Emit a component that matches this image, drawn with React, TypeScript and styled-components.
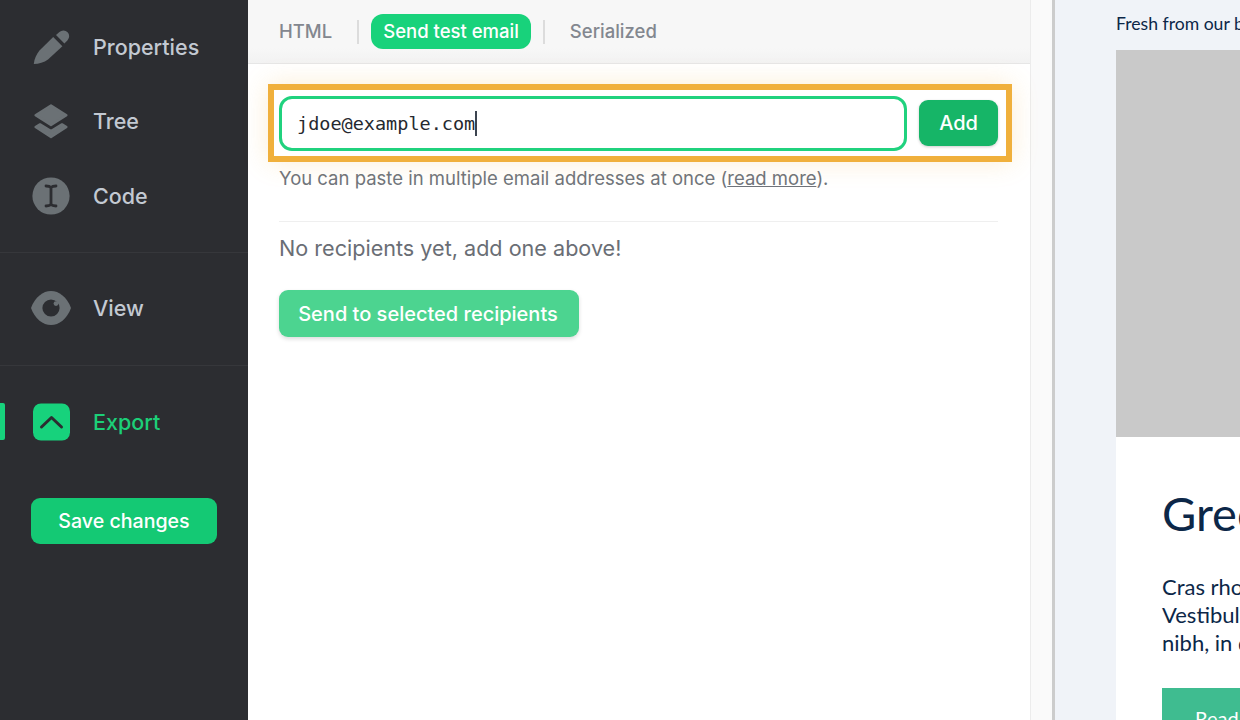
import React from 'react';
import styled, { createGlobalStyle } from 'styled-components';

const Global = createGlobalStyle`
  html, body { margin: 0; padding: 0; height: 100%; overflow: hidden; }
  body { font-family: Inter, "Liberation Sans", sans-serif; -webkit-font-smoothing: antialiased; }
`;

const Page = styled.div`
  display: flex;
  width: 1240px;
  height: 720px;
  overflow: hidden;
`;

const Sidebar = styled.nav`
  flex: 0 0 248px;
  background: #2c2d31;
  display: flex;
  flex-direction: column;
`;

const NavGroup = styled.div<{ $top: number; $bottom: number; $line?: boolean }>`
  padding: ${p => p.$top}px 0 ${p => p.$bottom}px;
  border-bottom: ${p => (p.$line ? '1px solid #36373b' : 'none')};
`;

const NavRow = styled.div<{ $active?: boolean }>`
  position: relative;
  height: 74.5px;
  display: flex;
  align-items: center;
  padding-left: 32px;
  gap: 23px;
  font-size: 21.5px;
  font-weight: 500;
  color: ${p => (p.$active ? '#1ccf78' : '#c3c9d2')};
`;

const ActiveMark = styled.span`
  position: absolute;
  left: 0;
  top: 18px;
  width: 5px;
  height: 37px;
  background: #17d27c;
  border-radius: 0 2px 2px 0;
`;

const IconBox = styled.svg`
  flex: 0 0 38px;
  width: 38px;
  height: 38px;
  display: block;
`;

const SaveButton = styled.button`
  align-self: flex-start;
  margin: 19px 0 0 31px;
  width: 186px;
  height: 46px;
  border: 0;
  border-radius: 9px;
  background: #14c974;
  color: #fff;
  font: 500 19.6px Inter, sans-serif;
  padding: 0;
`;

const Panel = styled.main`
  position: relative;
  flex: 0 0 782px;
  background: #fff;
  display: flex;
  flex-direction: column;
`;

const TabBar = styled.div`
  height: 64px;
  box-sizing: border-box;
  background: linear-gradient(#f7f7f7 0, #f7f7f7 48px, #f2f2f2 100%);
  border-bottom: 1px solid #e6e6e6;
  display: flex;
  align-items: center;
  padding-left: 18.5px;
`;

const Tab = styled.span<{ $active?: boolean }>`
  height: 35px;
  line-height: 35px;
  padding: 0 12.5px;
  border-radius: 12px;
  font-size: 18.5px;
  font-weight: 500;
  background: ${p => (p.$active ? '#18d27b' : 'transparent')};
  color: ${p => (p.$active ? '#fff' : '#83878f')};
`;

const TabSep = styled.span`
  width: 2px;
  height: 24px;
  background: #dcdcdc;
  margin: 0 12px;
`;

const Form = styled.section`
  padding: 32px 32px 0 31px;
`;

const InputRow = styled.div`
  display: flex;
  align-items: flex-start;
  gap: 12px;
`;

const InputBox = styled.div`
  flex: 1;
  height: 55px;
  box-sizing: border-box;
  border: 3px solid #20d27e;
  border-radius: 13px;
  display: flex;
  align-items: center;
  padding-left: 15px;
  font: 18.5px "DejaVu Sans Mono", monospace;
  color: #26292f;
  background: #fff;
`;

const Caret = styled.span`
  display: inline-block;
  width: 2px;
  height: 25px;
  background: #3c4450;
`;

const AddButton = styled.button`
  width: 79px;
  height: 46px;
  margin-top: 4px;
  border: 0;
  border-radius: 9px;
  background: #16b567;
  color: #fff;
  font: 500 20px Inter, sans-serif;
  padding: 0;
  box-shadow: 0 1px 3px rgba(0, 0, 0, 0.2);
`;

const Help = styled.p`
  margin: 14px 0 0;
  font-size: 18.5px;
  line-height: 26px;
  color: #6f747b;
  a { color: inherit; text-decoration: underline; }
`;

const Rule = styled.hr`
  border: 0;
  height: 1px;
  background: #efefef;
  margin: 30px 0 0;
`;

const Empty = styled.p`
  margin: 11px 0 0;
  font-size: 21.6px;
  line-height: 30px;
  color: #6a6e75;
`;

const SendButton = styled.button`
  display: block;
  margin-top: 27px;
  width: 300px;
  height: 47px;
  border: 0;
  border-radius: 9px;
  background: #4cd490;
  color: #fff;
  font: 500 20px Inter, sans-serif;
  padding: 0 2px 0 0;
  box-shadow: 0 2px 4px rgba(0, 0, 0, 0.14);
`;

const Highlight = styled.div`
  position: absolute;
  left: 20px;
  top: 84px;
  width: 744px;
  height: 78px;
  box-sizing: border-box;
  border: 6px solid #f0b03c;
  box-shadow: 0 0 24px rgba(240, 176, 60, 0.22);
  pointer-events: none;
`;

const Gutter = styled.div`
  flex: 0 0 25px;
  box-sizing: border-box;
  background: #fafafa;
  border-left: 1px solid #ececec;
  border-right: 3px solid #cccccc;
`;

const Preview = styled.aside`
  flex: 1;
  min-width: 0;
  background: #f0f3f8;
  padding-left: 61px;
  overflow: hidden;
  font-family: Lato, "Open Sans", sans-serif;
  color: #0c2748;
`;

const Lead = styled.div`
  height: 50px;
  line-height: 48px;
  font-size: 17.6px;
  white-space: nowrap;
`;

const Card = styled.article`
  width: 600px;
  background: #fff;
`;

const Hero = styled.div`
  height: 387px;
  background: #c9c9c9;
`;

const CardBody = styled.div`
  padding: 46px 46px 0;
`;

const Title = styled.h1`
  margin: 0;
  font-size: 47px;
  line-height: 60px;
  font-weight: 400;
  white-space: nowrap;
`;

const Para = styled.p`
  margin: 30px 0 0;
  font-size: 22px;
  line-height: 28px;
  white-space: nowrap;
`;

const Cta = styled.div`
  display: inline-block;
  margin-top: 31px;
  background: #3fbc90;
  color: #fff;
  font-size: 20px;
  padding: 18px 33px;
`;

const Grey = '#6b7175';

const PencilIcon = () => (
  <IconBox viewBox="0 0 38 38">
    <path fill={Grey} d="M1.8 36 C2.2 31 4.5 26 7.5 22.5 L21.2 9 L30.4 18.2 L16 31.5 C12 34.5 7 35.8 1.8 36 Z" />
    <path fill={Grey} d="M24 7 L27.4 4 A5.8 5.8 0 0 1 35.4 12.4 L32.4 15.4 Z" />
  </IconBox>
);

const LayersIcon = () => (
  <IconBox viewBox="0 0 38 38">
    <path fill={Grey} stroke={Grey} strokeWidth="2.4" strokeLinejoin="round" d="M19 3.4 L34.4 13.2 L19 23 L3.6 13.2 Z" />
    <path fill={Grey} stroke={Grey} strokeWidth="2.4" strokeLinejoin="round" d="M8 22.4 L19 29 L30 22.4 L34.4 25 L19 35 L3.6 25 Z" />
  </IconBox>
);

const CodeIcon = () => (
  <IconBox viewBox="0 0 38 38">
    <circle cx="19" cy="19" r="18.6" fill={Grey} />
    <path fill="none" stroke="#2c2d31" strokeWidth="2.8" strokeLinecap="round" d="M14 9 C16.4 9 18 9.4 19 10.4 C20 9.4 21.6 9 24 9 M19 10.4 V27.6 M14 29 C16.4 29 18 28.6 19 27.6 C20 28.6 21.6 29 24 29" />
  </IconBox>
);

const EyeIcon = () => (
  <IconBox viewBox="0 0 38 38" style={{ overflow: 'visible' }}>
    <path fill={Grey} d="M-1 19 C3 8 11 2 19 2 C27 2 35 8 39 19 C35 30 27 36 19 36 C11 36 3 30 -1 19 Z" />
    <circle cx="19" cy="19" r="8.6" fill="#2c2d31" />
    <circle cx="24" cy="14.6" r="2.4" fill={Grey} />
  </IconBox>
);

const ExportIcon = () => (
  <IconBox viewBox="0 0 38 38">
    <rect x="1" y="0.5" width="37" height="37" rx="8" fill="#17d27c" />
    <path fill="none" stroke="#2c2d31" strokeWidth="3" strokeLinecap="round" strokeLinejoin="round" d="M9.5 24 L19.5 14.5 L29.5 24" />
  </IconBox>
);

export default function App() {
  return (
    <Page>
      <Global />
      <Sidebar>
        <NavGroup $top={9.5} $bottom={18.5} $line>
          <NavRow><PencilIcon />Properties</NavRow>
          <NavRow><LayersIcon />Tree</NavRow>
          <NavRow><CodeIcon />Code</NavRow>
        </NavGroup>
        <NavGroup $top={18} $bottom={20} $line>
          <NavRow><EyeIcon />View</NavRow>
        </NavGroup>
        <NavGroup $top={19} $bottom={19}>
          <NavRow $active><ActiveMark /><ExportIcon />Export</NavRow>
        </NavGroup>
        <SaveButton>Save changes</SaveButton>
      </Sidebar>
      <Panel>
        <TabBar>
          <Tab>HTML</Tab>
          <TabSep />
          <Tab $active>Send test email</Tab>
          <TabSep />
          <Tab>Serialized</Tab>
        </TabBar>
        <Form>
          <InputRow>
            <InputBox>jdoe@example.com<Caret /></InputBox>
            <AddButton>Add</AddButton>
          </InputRow>
          <Help>You can paste in multiple email addresses at once (<a>read more</a>).</Help>
          <Rule />
          <Empty>No recipients yet, add one above!</Empty>
          <SendButton>Send to selected recipients</SendButton>
        </Form>
        <Highlight />
      </Panel>
      <Gutter />
      <Preview>
        <Lead>Fresh from our blog</Lead>
        <Card>
          <Hero />
          <CardBody>
            <Title>Greetings from the team</Title>
            <Para>
              Cras rhoncus odio a sapien pulvinar, sed tempor nibh.<br />
              Vestibulum ante ipsum primis in faucibus orci luctus.<br />
              nibh, in dapibus lorem suscipit vitae.
            </Para>
            <Cta>Read more</Cta>
          </CardBody>
        </Card>
      </Preview>
    </Page>
  );
}
